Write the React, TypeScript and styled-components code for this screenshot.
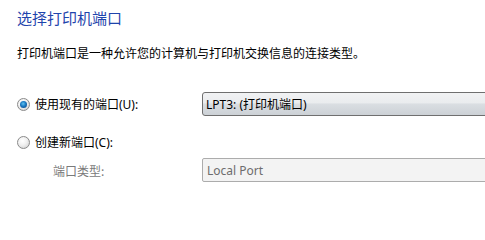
import React from 'react'
import styled, { createGlobalStyle } from 'styled-components'

const GlobalStyle = createGlobalStyle`
	html, body {
		margin: 0;
		padding: 0;
		background: #ffffff;
		overflow: hidden;
	}
	body {
		font-family: "Noto Sans", "Noto Sans CJK SC", sans-serif;
		color: #000000;
	}
`

const Page = styled.div`
	width: 485px;
	height: 214px;
	overflow: hidden;
	display: flex;
	flex-direction: column;
	padding-left: 17px;
	box-sizing: border-box;
`

const Title = styled.div`
	margin-top: 8px;
	font-size: 15px;
	line-height: 20px;
	color: #1f44ac;
	font-family: "Noto Sans CJK SC", sans-serif;
`

const Description = styled.div`
	margin-top: 16px;
	font-size: 12px;
	line-height: 18px;
	font-family: "Noto Sans CJK SC", sans-serif;
	white-space: nowrap;
`

const Row = styled.div<{ $top: number }>`
	display: grid;
	grid-template-columns: 185px 320px;
	align-items: center;
	height: 24px;
	margin-top: ${({ $top }) => $top}px;
`

const RadioLabel = styled.label`
	display: flex;
	align-items: center;
	gap: 5px;
	font-size: 12px;
	font-family: "Noto Sans", "Noto Sans CJK SC", sans-serif;
	white-space: nowrap;
`

const RadioCircle = styled.span<{ $checked?: boolean }>`
	position: relative;
	width: 11px;
	height: 11px;
	border-radius: 50%;
	border: 1px solid #8a8a8a;
	background: radial-gradient(circle at 40% 35%, #ffffff 0%, #f0f0f0 45%, #c9c9c9 100%);
	flex-shrink: 0;

	&::after {
		content: '';
		display: ${({ $checked }) => ($checked ? 'block' : 'none')};
		position: absolute;
		left: 2px;
		top: 2px;
		width: 7px;
		height: 7px;
		border-radius: 50%;
		background: radial-gradient(circle at 45% 40%, #5fc2ef 0%, #1a78c2 45%, #0d3f78 100%);
	}
`

const FieldLabel = styled.span`
	padding-left: 36px;
	font-size: 12px;
	color: #7a7a7a;
	font-family: "Noto Sans CJK SC", sans-serif;
	white-space: nowrap;
`

const Combo = styled.div`
	height: 24px;
	box-sizing: border-box;
	border: 1px solid #6f6f6f;
	border-radius: 3px;
	background: linear-gradient(
		to bottom,
		#f1f2f3 0%,
		#eaecee 45%,
		#dadee2 50%,
		#ccd1d6 100%
	);
	display: flex;
	align-items: center;
	padding-left: 3px;
	font-size: 12px;
	font-family: "Noto Sans", "Noto Sans CJK SC", sans-serif;
	white-space: nowrap;
`

const TextBox = styled.div`
	height: 24px;
	box-sizing: border-box;
	border: 1px solid #acacac;
	border-radius: 2px;
	background: #f3f3f3;
	display: flex;
	align-items: center;
	padding-left: 4px;
	font-size: 12px;
	color: #6d6d6d;
	font-family: "Noto Sans", sans-serif;
`

export default function App() {
	return (
		<>
			<GlobalStyle />
			<Page>
				<Title>选择打印机端口</Title>
				<Description>打印机端口是一种允许您的计算机与打印机交换信息的连接类型。</Description>
				<Row $top={30}>
					<RadioLabel>
						<RadioCircle $checked />
						使用现有的端口(U):
					</RadioLabel>
					<Combo>LPT3: (打印机端口)</Combo>
				</Row>
				<Row $top={14}>
					<RadioLabel>
						<RadioCircle />
						创建新端口(C):
					</RadioLabel>
				</Row>
				<Row $top={4}>
					<FieldLabel>端口类型:</FieldLabel>
					<TextBox>Local Port</TextBox>
				</Row>
			</Page>
		</>
	)
}
